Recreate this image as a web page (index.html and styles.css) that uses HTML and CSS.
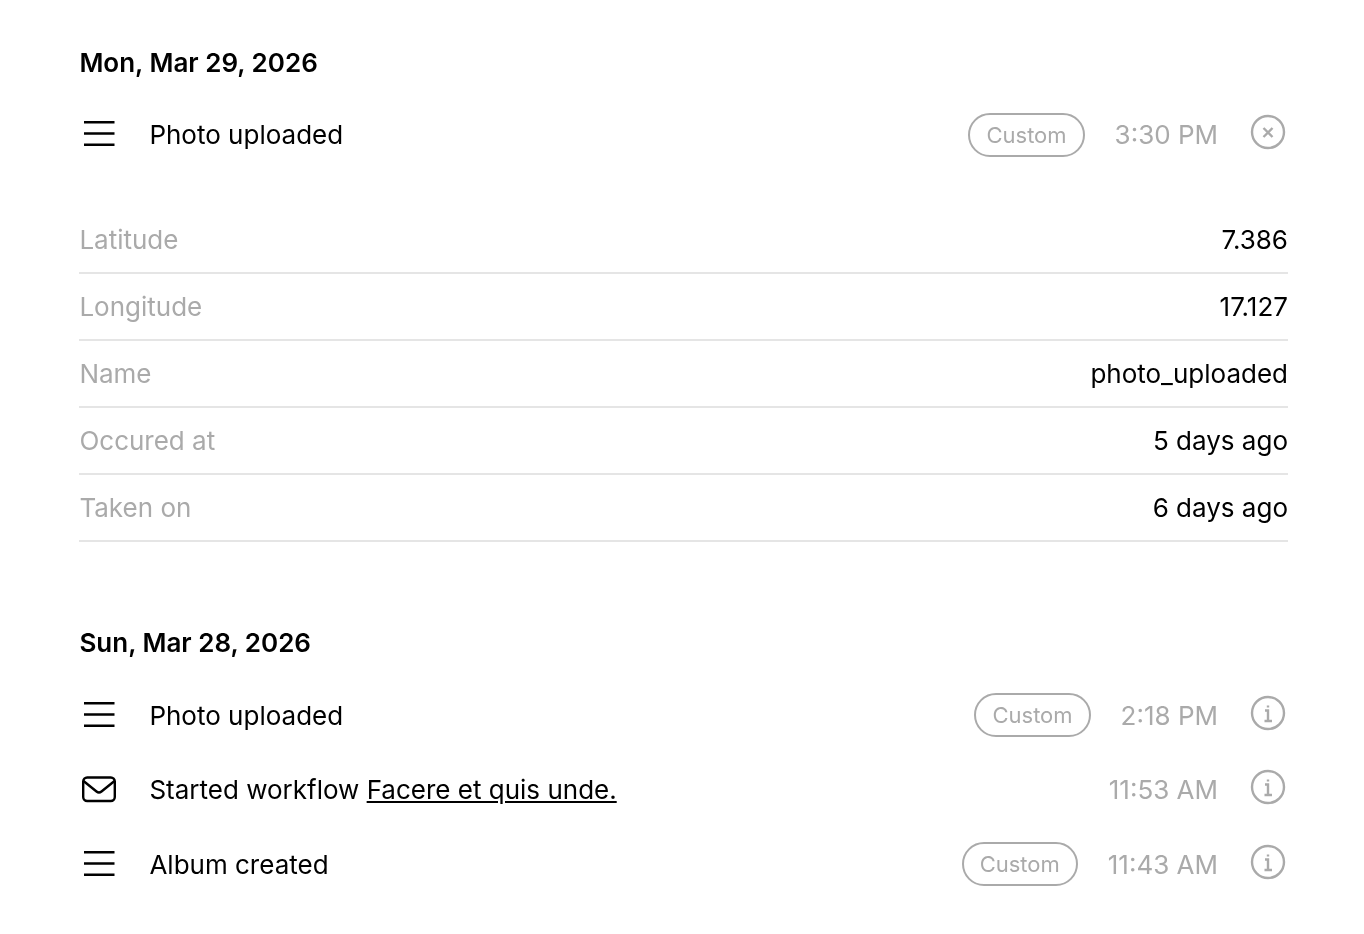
FILE: index.html
```html
<!DOCTYPE html>
<html lang="en">

<head>
    <meta charset="UTF-8">
    <meta name="viewport" content="width=device-width, initial-scale=1.0">
    <title>Activity</title>
    <link rel="stylesheet" href="styles.css">
</head>

<body>
    <div class="feed">
        <section class="day">
            <h2 class="day-title">Mon, Mar 29, 2026</h2>
            <div class="event">
                <svg class="event-icon" viewBox="0 0 38 38">
                    <path d="M5 6.2H35.5M5 17.5H35.5M5 28.8H35.5"></path>
                </svg>
                <div class="event-name">Photo uploaded</div>
                <div class="badge">Custom</div>
                <div class="event-time">3:30 PM</div>
                <svg class="event-action" viewBox="0 0 38 38">
                    <circle cx="19" cy="19" r="16"></circle>
                    <path d="M14.5 15L23.5 24M23.5 15L14.5 24"></path>
                </svg>
            </div>
            <div class="details">
                <div class="detail-row">
                    <div class="detail-key">Latitude</div>
                    <div class="detail-value">7.386</div>
                </div>
                <div class="detail-row">
                    <div class="detail-key">Longitude</div>
                    <div class="detail-value">17.127</div>
                </div>
                <div class="detail-row">
                    <div class="detail-key">Name</div>
                    <div class="detail-value">photo_uploaded</div>
                </div>
                <div class="detail-row">
                    <div class="detail-key">Occured at</div>
                    <div class="detail-value">5 days ago</div>
                </div>
                <div class="detail-row">
                    <div class="detail-key">Taken on</div>
                    <div class="detail-value">6 days ago</div>
                </div>
            </div>
        </section>

        <section class="day">
            <h2 class="day-title">Sun, Mar 28, 2026</h2>
            <div class="event">
                <svg class="event-icon" viewBox="0 0 38 38">
                    <path d="M5 6.2H35.5M5 17.5H35.5M5 28.8H35.5"></path>
                </svg>
                <div class="event-name">Photo uploaded</div>
                <div class="badge">Custom</div>
                <div class="event-time">2:18 PM</div>
                <svg class="event-action" viewBox="0 0 38 38">
                    <circle cx="19" cy="19" r="16"></circle>
                    <path d="M16 16.5H19V27M15.5 27H23M19 11.5V13.5"></path>
                </svg>
            </div>
            <div class="event">
                <svg class="event-icon" viewBox="0 0 38 38">
                    <rect x="4.2" y="6.5" width="31.6" height="23.5" rx="4"></rect>
                    <path d="M4.5 10L17.5 20.5Q20 22.5 22.5 20.5L35.5 10"></path>
                </svg>
                <div class="event-name">Started workflow <a class="event-link" href="#">Facere et quis unde.</a></div>
                <div class="event-time">11:53 AM</div>
                <svg class="event-action" viewBox="0 0 38 38">
                    <circle cx="19" cy="19" r="16"></circle>
                    <path d="M16 16.5H19V27M15.5 27H23M19 11.5V13.5"></path>
                </svg>
            </div>
            <div class="event">
                <svg class="event-icon" viewBox="0 0 38 38">
                    <path d="M5 6.2H35.5M5 17.5H35.5M5 28.8H35.5"></path>
                </svg>
                <div class="event-name">Album created</div>
                <div class="badge">Custom</div>
                <div class="event-time">11:43 AM</div>
                <svg class="event-action" viewBox="0 0 38 38">
                    <circle cx="19" cy="19" r="16"></circle>
                    <path d="M16 16.5H19V27M15.5 27H23M19 11.5V13.5"></path>
                </svg>
            </div>
        </section>
    </div>
</body>

</html>
```

FILE: styles.css
```css
* {
    box-sizing: border-box;
    font-family: "Inter", sans-serif;
}

html,
body {
    margin: 0;
    padding: 0;
    background: #fff;
    color: #000;
}

.feed {
    padding: 44px 76px 0 79.4px;
    font-size: 26px;
    line-height: 38px;
    will-change: transform;
}

.day {
    margin-bottom: 82px;
}

.day:last-child {
    margin-bottom: 0;
}

.day-title {
    margin: 0 0 16px;
    font-size: 26px;
    font-weight: 600;
    line-height: 38px;
}

.day + .day .day-title {
    margin-bottom: 17px;
}

.event {
    display: flex;
    align-items: center;
    height: 74.5px;
}

.event-icon {
    flex: none;
    width: 38px;
    height: 38px;
    margin-right: 32px;
    fill: none;
    stroke: #000;
    stroke-width: 2.4;
}

.event-name {
    flex: 1;
}

.event-link {
    color: #000;
    text-decoration: underline;
}

.badge {
    height: 44px;
    padding: 0 16px;
    margin: -1px 30px 0 0;
    border: 2px solid #aaa;
    border-radius: 22px;
    color: #aaa;
    font-size: 22px;
    line-height: 40px;
}

.event-time {
    color: #aaa;
}

.event-action {
    flex: none;
    width: 38px;
    height: 38px;
    margin: -6px 1px 0 31px;
    fill: none;
    stroke: #aaa;
    stroke-width: 2.4;
}

.details {
    margin-top: 34px;
}

.detail-row {
    display: flex;
    justify-content: space-between;
    align-items: center;
    height: 67px;
    padding-top: 2px;
    border-bottom: 2px solid #e5e5e5;
}

.detail-key {
    color: #aaa;
}
```
